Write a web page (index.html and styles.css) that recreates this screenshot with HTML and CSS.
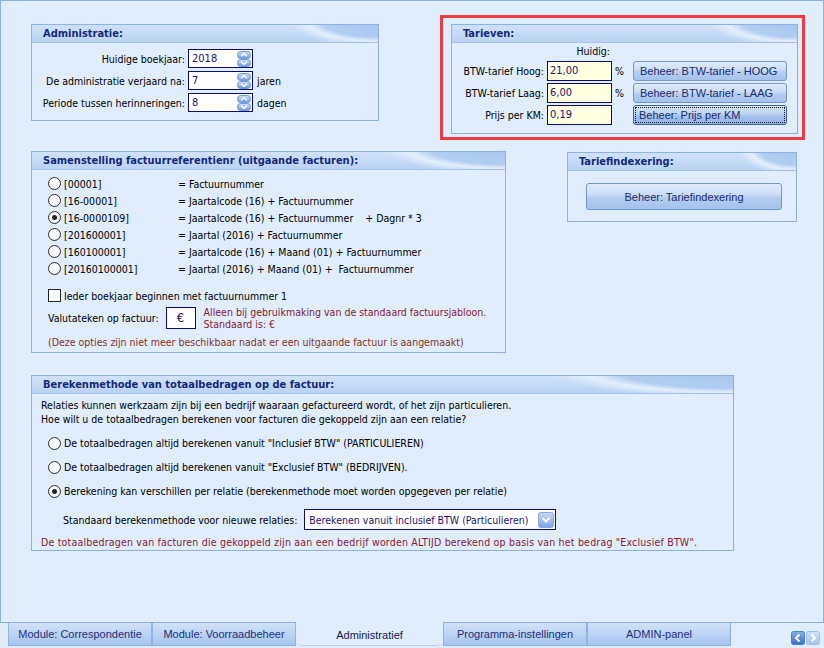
FILE: index.html
```html
<!DOCTYPE html>
<html lang="nl">
<head>
<meta charset="utf-8">
<title>Administratief</title>
<link rel="stylesheet" href="styles.css">
</head>
<body>
<div class="window">
  <div class="row row-top">
    <section class="panel panel-admin">
      <header class="panel-head">Administratie:</header>
      <div class="admin-body">
        <span class="lbl">Huidige boekjaar:</span>
        <span class="spin-input"><span class="val">2018</span>
          <svg class="spin" width="14" height="16" viewBox="0 0 14 16"><rect x="0.5" y="0.5" width="13" height="7" rx="3" fill="url(#gBlue)" stroke="#7599d6"/><rect x="0.5" y="8.5" width="13" height="7" rx="3" fill="url(#gBlue)" stroke="#7599d6"/><path d="M4 5.2 L7 2.6 L10 5.2" fill="none" stroke="#fff" stroke-width="1.4"/><path d="M4 10.8 L7 13.4 L10 10.8" fill="none" stroke="#fff" stroke-width="1.4"/></svg>
        </span>
        <span class="unit"></span>
        <span class="lbl">De administratie verjaard na:</span>
        <span class="spin-input"><span class="val">7</span>
          <svg class="spin" width="14" height="16" viewBox="0 0 14 16"><rect x="0.5" y="0.5" width="13" height="7" rx="3" fill="url(#gBlue)" stroke="#7599d6"/><rect x="0.5" y="8.5" width="13" height="7" rx="3" fill="url(#gBlue)" stroke="#7599d6"/><path d="M4 5.2 L7 2.6 L10 5.2" fill="none" stroke="#fff" stroke-width="1.4"/><path d="M4 10.8 L7 13.4 L10 10.8" fill="none" stroke="#fff" stroke-width="1.4"/></svg>
        </span>
        <span class="unit">jaren</span>
        <span class="lbl">Periode tussen herinneringen:</span>
        <span class="spin-input"><span class="val">8</span>
          <svg class="spin" width="14" height="16" viewBox="0 0 14 16"><rect x="0.5" y="0.5" width="13" height="7" rx="3" fill="url(#gBlue)" stroke="#7599d6"/><rect x="0.5" y="8.5" width="13" height="7" rx="3" fill="url(#gBlue)" stroke="#7599d6"/><path d="M4 5.2 L7 2.6 L10 5.2" fill="none" stroke="#fff" stroke-width="1.4"/><path d="M4 10.8 L7 13.4 L10 10.8" fill="none" stroke="#fff" stroke-width="1.4"/></svg>
        </span>
        <span class="unit">dagen</span>
      </div>
    </section>

    <section class="panel panel-tarieven highlight">
      <header class="panel-head">Tarieven:</header>
      <div class="tarief-body">
        <span></span><span class="col-head">Huidig:</span><span></span><span></span>
        <span class="lbl">BTW-tarief Hoog:</span><span class="rate-input">21,00</span><span class="pct">%</span><span class="btn btn-left">Beheer: BTW-tarief - HOOG</span>
        <span class="lbl">BTW-tarief Laag:</span><span class="rate-input">6,00</span><span class="pct">%</span><span class="btn btn-left">Beheer: BTW-tarief - LAAG</span>
        <span class="lbl">Prijs per KM:</span><span class="rate-input">0,19</span><span></span><span class="btn btn-left btn-default"><span class="focus">Beheer: Prijs per KM</span></span>
      </div>
    </section>
  </div>

  <div class="row row-mid">
    <section class="panel panel-ref">
      <header class="panel-head">Samenstelling factuurreferentienr (uitgaande facturen):</header>
      <div class="ref-body">
        <div class="ref-list">
          <span class="opt"><span class="radio"></span>[00001]</span><span>= Factuurnummer</span>
          <span class="opt"><span class="radio"></span>[16-00001]</span><span>= Jaartalcode (16) + Factuurnummer</span>
          <span class="opt"><span class="radio checked"></span>[16-0000109]</span><span>= Jaartalcode (16) + Factuurnummer&nbsp;&nbsp;&nbsp; + Dagnr * 3</span>
          <span class="opt"><span class="radio"></span>[201600001]</span><span>= Jaartal (2016) + Factuurnummer</span>
          <span class="opt"><span class="radio"></span>[160100001]</span><span>= Jaartalcode (16) + Maand (01) + Factuurnummer</span>
          <span class="opt"><span class="radio"></span>[20160100001]</span><span>= Jaartal (2016) + Maand (01) +&nbsp; Factuurnummer</span>
        </div>
        <div class="check-row"><span class="checkbox"></span>Ieder boekjaar beginnen met factuurnummer 1</div>
        <div class="currency-row">
          <span>Valutateken op factuur:</span>
          <span class="euro-box">€</span>
          <span class="note">Alleen bij gebruikmaking van de standaard factuursjabloon.<br>Standaard is: €</span>
        </div>
        <div class="note-brown">(Deze opties zijn niet meer beschikbaar nadat er een uitgaande factuur is aangemaakt)</div>
      </div>
    </section>

    <section class="panel panel-index">
      <header class="panel-head">Tariefindexering:</header>
      <div class="index-body">
        <span class="btn btn-wide">Beheer: Tariefindexering</span>
      </div>
    </section>
  </div>

  <section class="panel panel-calc">
    <header class="panel-head">Berekenmethode van totaalbedragen op de factuur:</header>
    <div class="calc-body">
      <p class="intro">Relaties kunnen werkzaam zijn bij een bedrijf waaraan gefactureerd wordt, of het zijn particulieren.<br>Hoe wilt u de totaalbedragen berekenen voor facturen die gekoppeld zijn aan een relatie?</p>
      <div class="calc-opts">
        <div class="calc-opt"><span class="radio"></span>De totaalbedragen altijd berekenen vanuit "Inclusief BTW" (PARTICULIEREN)</div>
        <div class="calc-opt"><span class="radio"></span>De totaalbedragen altijd berekenen vanuit "Exclusief BTW" (BEDRIJVEN).</div>
        <div class="calc-opt"><span class="radio checked"></span>Berekening kan verschillen per relatie (berekenmethode moet worden opgegeven per relatie)</div>
      </div>
      <div class="select-row">
        <span>Standaard berekenmethode voor nieuwe relaties:</span>
        <span class="select"><span>Berekenen vanuit inclusief BTW (Particulieren)</span>
          <svg class="drop" width="16" height="16" viewBox="0 0 16 16"><rect x="0.5" y="0.5" width="15" height="15" rx="2" fill="url(#gDrop)" stroke="#86a7da"/><path d="M4.5 6 L8 9.5 L11.5 6" fill="none" stroke="#fff" stroke-width="2"/></svg>
        </span>
      </div>
      <p class="note">De totaalbedragen van facturen die gekoppeld zijn aan een bedrijf worden ALTIJD berekend op basis van het bedrag "Exclusief BTW".</p>
    </div>
  </section>
</div>

<nav class="tabs">
  <span class="tab">Module: Correspondentie</span>
  <span class="tab">Module: Voorraadbeheer</span>
  <span class="tab active">Administratief</span>
  <span class="tab">Programma-instellingen</span>
  <span class="tab">ADMIN-panel</span>
  <span class="tab-nav">
    <svg width="14" height="14" viewBox="0 0 14 14"><rect x="0.5" y="0.5" width="13" height="13" rx="2" fill="url(#gNavDark)" stroke="#4f7fcf"/><path d="M8.5 3.5 L5 7 L8.5 10.5" fill="none" stroke="#fff" stroke-width="1.8"/></svg>
    <svg width="14" height="14" viewBox="0 0 14 14"><rect x="0.5" y="0.5" width="13" height="13" rx="2" fill="url(#gNavLight)" stroke="#a3c0ea"/><path d="M5.5 3.5 L9 7 L5.5 10.5" fill="none" stroke="#fff" stroke-width="1.8"/></svg>
  </span>
</nav>

<svg class="defs" width="0" height="0" aria-hidden="true">
  <defs>
    <linearGradient id="gBlue" x1="0" y1="0" x2="0" y2="1"><stop offset="0" stop-color="#cfe0f8"/><stop offset="1" stop-color="#6d98d8"/></linearGradient>
    <linearGradient id="gDrop" x1="0" y1="0" x2="0" y2="1"><stop offset="0" stop-color="#c9dcf7"/><stop offset="1" stop-color="#7aa3e0"/></linearGradient>
    <linearGradient id="gNavDark" x1="0" y1="0" x2="0" y2="1"><stop offset="0" stop-color="#86aee8"/><stop offset="1" stop-color="#3e6fc6"/></linearGradient>
    <linearGradient id="gNavLight" x1="0" y1="0" x2="0" y2="1"><stop offset="0" stop-color="#cfe1f8"/><stop offset="1" stop-color="#a2c2ed"/></linearGradient>
  </defs>
</svg>
</body>
</html>
```

FILE: styles.css
```css
* { box-sizing: border-box; }

body {
  margin: 0;
  width: 824px;
  height: 648px;
  overflow: hidden;
  background: #dfedfc;
  color: #000;
  font-family: "DejaVu Sans Condensed", "DejaVu Sans", sans-serif;
  font-size: 10.5px;
  line-height: 14px;
}

.window {
  width: 824px;
  height: 623px;
  border: 1px solid #8db2e3;
  padding: 23px 0 0 30px;
}

.row { display: flex; align-items: flex-start; }

/* panels */
.panel {
  border: 1px solid #8db2e3;
  background: #dfedfc;
}

.panel-head {
  height: 18px;
  line-height: 17px;
  padding-left: 11px;
  font-weight: bold;
  font-size: 11px;
  color: #15287a;
  border-bottom: 1px solid #a3c1ea;
  background:
    radial-gradient(ellipse 34% 210% at 100% -30%, #a7c7f0 0%, #b0cdf1 48%, #e4eefb 60%, rgba(228, 238, 251, 0) 76%),
    linear-gradient(to bottom, #d0e2f8, #bad3f3);
}

.panel-admin { width: 348px; height: 97px; }
.panel-tarieven { width: 347px; height: 110px; margin-left: 72px; }

.row-mid { margin-top: 17px; }
.panel-ref { width: 475px; height: 202px; }
.panel-index { width: 230px; height: 70px; margin-left: 61px; margin-top: 1px; }
.panel-calc { width: 703px; height: 176px; margin-top: 22px; }

/* red outline drawn over the tariff panel */
.highlight { position: relative; }
.highlight::after {
  content: "";
  position: absolute;
  left: -12px;
  top: -10px;
  right: -8px;
  bottom: -7px;
  border: 3px solid #ef3a40;
  pointer-events: none;
}

/* Administratie */
.admin-body {
  display: grid;
  grid-template-columns: 153px 65px auto;
  grid-auto-rows: 19px;
  column-gap: 3px;
  row-gap: 3px;
  padding-top: 6px;
}
.lbl { text-align: right; align-self: center; white-space: nowrap; }
.unit { align-self: center; padding-left: 1px; }

.spin-input {
  display: flex;
  align-items: center;
  justify-content: space-between;
  border: 1px solid #0c0c6e;
  background: #fff;
  padding: 0 1px 0 3px;
  color: #1d1170;
  font-size: 11px;
}
.spin { display: block; }

/* Tarieven */
.tarief-body {
  display: grid;
  grid-template-columns: 92px 65px 15px 154px;
  grid-template-rows: 15px 20px 20px 20px;
  column-gap: 3px;
  row-gap: 2px;
  padding-top: 1px;
}
.col-head { text-align: right; padding-right: 2px; line-height: 15px; }
.rate-input {
  border: 1px solid #0c0c6e;
  background: #ffffe1;
  color: #1d1170;
  font-size: 11px;
  line-height: 18px;
  padding-left: 2px;
}
.pct { align-self: center; }

/* buttons */
.btn {
  display: flex;
  align-items: center;
  justify-content: center;
  border: 1px solid #7597d0;
  border-radius: 3px;
  background: linear-gradient(to bottom, #e0ebfa 0%, #c9dcf6 45%, #b4cdf1 55%, #a4c2ed 100%);
  color: #1b2b6b;
  font-family: "Liberation Sans", Arial, sans-serif;
  font-size: 11px;
  white-space: nowrap;
}
.btn-left { justify-content: flex-start; padding-left: 6px; }
.btn-default {
  border-color: #3b64b5;
  background: linear-gradient(to bottom, #d6e5f9 0%, #bcd3f3 45%, #a5c2ee 55%, #8fb3ea 100%);
  padding: 2px;
}
.focus {
  flex: 1;
  align-self: stretch;
  display: flex;
  align-items: center;
  padding-left: 3px;
  outline: 1px dotted #1a1a1a;
}
.btn-wide { width: 196px; height: 27px; }

/* Samenstelling */
.ref-body { padding: 5px 0 0 16px; }
.ref-list {
  display: grid;
  grid-template-columns: 127px auto;
  grid-auto-rows: 17px;
  align-items: center;
}
.ref-list > span:nth-child(even) { padding-left: 3px; }
.opt { display: flex; align-items: center; }

.radio {
  width: 13px;
  height: 13px;
  border: 1px solid #2e2e2e;
  border-radius: 50%;
  background: radial-gradient(circle at 40% 35%, #ffffff 0%, #f4f6f8 60%, #dde2e8 100%);
  margin-right: 3px;
  display: flex;
  align-items: center;
  justify-content: center;
  flex: none;
}
.radio.checked::before {
  content: "";
  width: 5px;
  height: 5px;
  border-radius: 50%;
  background: #222;
}

.check-row {
  display: flex;
  align-items: center;
  height: 17px;
  margin-top: 10px;
}
.checkbox {
  width: 13px;
  height: 13px;
  border: 1px solid #222;
  background: #fafbfc;
  margin-right: 3px;
}

.currency-row {
  display: flex;
  align-items: center;
  margin-top: 3px;
  height: 22px;
}
.euro-box {
  width: 30px;
  height: 22px;
  margin-left: 7px;
  border: 1px solid #0c0c6e;
  background: #fff;
  color: #1d1170;
  font-size: 13px;
  text-align: center;
  line-height: 20px;
}
.note {
  color: #8a1830;
  line-height: 12px;
}
.currency-row .note { margin-left: 8px; }
.note-brown {
  color: #8a3020;
  margin-top: 6px;
  line-height: 14px;
}

/* Tariefindexering */
.index-body { padding: 12px 0 0 18px; }

/* Berekenmethode */
.calc-body { padding: 4px 0 0 9px; }
.intro { margin: 0; line-height: 14px; }
.calc-opts { margin-top: 5px; padding-left: 7px; }
.calc-opt {
  display: flex;
  align-items: center;
  height: 24px;
}
.select-row {
  display: flex;
  align-items: center;
  height: 21px;
  margin-top: 6px;
  padding-left: 22px;
}
.select {
  display: flex;
  align-items: center;
  justify-content: space-between;
  width: 252px;
  height: 21px;
  margin-left: 7px;
  padding: 0 1px 0 4px;
  border: 1px solid #0c0c6e;
  background: #fff;
  color: #1d1170;
}
.drop { display: block; }
.calc-body > .note { margin: 5px 0 0; line-height: 14px; letter-spacing: 0.2px; }

/* bottom tabs */
.tabs {
  display: flex;
  height: 25px;
  margin-top: -1px;
  padding-left: 8px;
  font-family: "Liberation Sans", Arial, sans-serif;
  font-size: 11px;
}
.tab {
  width: 144px;
  height: 24px;
  border: 1px solid #8db2e3;
  background: linear-gradient(to bottom, #d2e3f8, #b6d0f2 60%, #a4c3ee);
  color: #1e2f7c;
  display: flex;
  align-items: center;
  justify-content: center;
}
.tab.active {
  width: 147px;
  border: none;
  border-bottom: 1px solid #b8cfee;
  border-radius: 0 0 10px 10px / 0 0 3px 3px;
  background: #dfedfc;
  color: #111a55;
  padding-top: 2px;
}
.tab-nav {
  display: flex;
  gap: 1px;
  margin-left: auto;
  margin-right: 4px;
  align-self: flex-end;
  margin-bottom: 2px;
}
.tab-nav svg { display: block; }

.defs { display: block; width: 0; height: 0; overflow: hidden; }
```
